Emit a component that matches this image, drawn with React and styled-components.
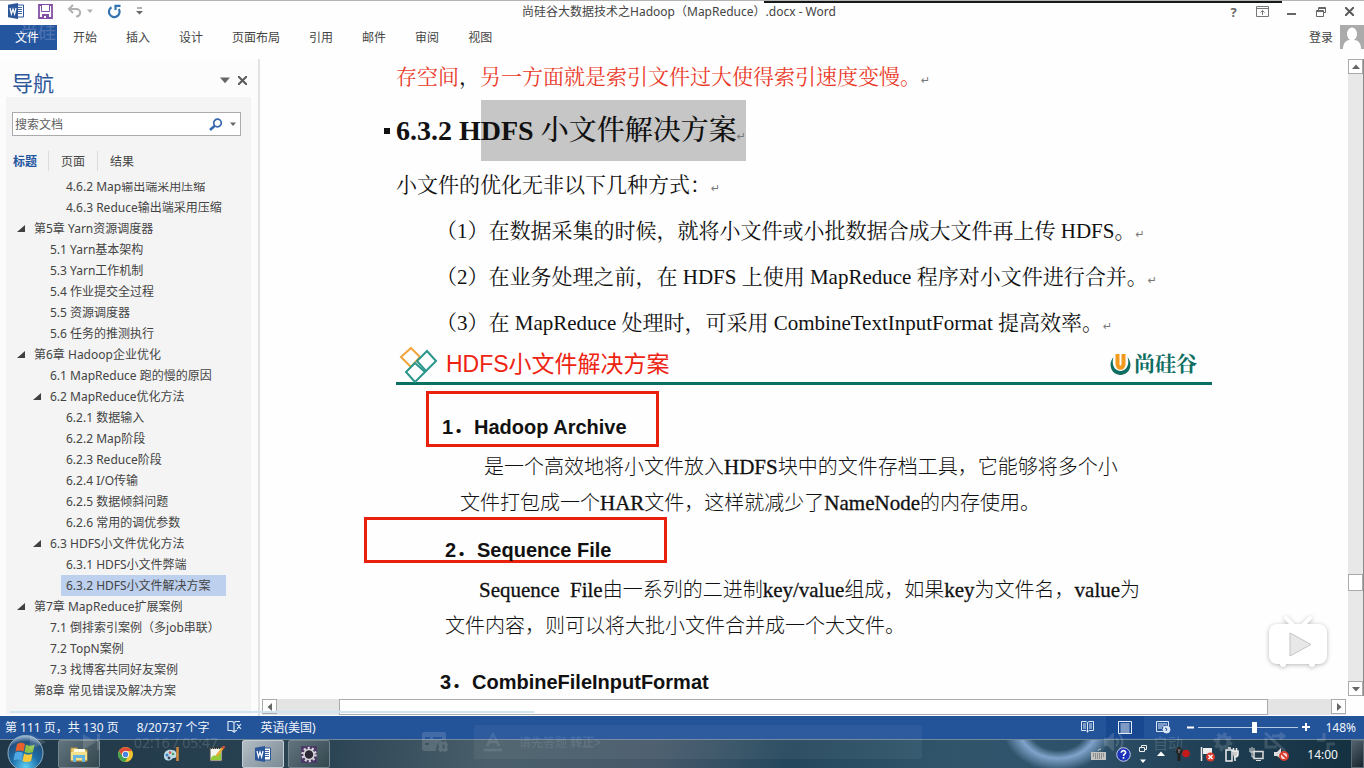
import React, { useState } from "react";
import styled, { createGlobalStyle, css } from "styled-components";

const UI = `"Noto Sans", "Noto Sans CJK SC", sans-serif`;
const SERIF = `"Liberation Serif", "Noto Serif CJK SC", "Noto Sans CJK SC", serif`;
const ARIAL = `"Liberation Sans", "Noto Sans CJK SC", sans-serif`;
const SLIDE = `"Noto Sans CJK SC", sans-serif`;

const Global = createGlobalStyle`
  *, *::before, *::after { box-sizing: border-box; }
  body { margin: 0; font-family: ${UI}; font-size: 12px; color: #444; background: #fff; }
  button, input { font: inherit; color: inherit; }
  h1, h2, h3, p, ul { margin: 0; padding: 0; font-weight: inherit; }
  svg { display: block; flex: none; }
`;

const Window = styled.div`
  position: relative;
  display: flex;
  flex-direction: column;
  height: 100vh;
  min-width: 1100px;
  overflow: hidden;
  background: #fefefe;
`;

const PlainButton = styled.button`
  display: flex;
  align-items: center;
  justify-content: center;
  border: 0;
  padding: 0;
  background: transparent;
`;

/* ---------- title bar ---------- */
const TitleBar = styled.header`
  display: grid;
  grid-template-columns: 1fr auto 1fr;
  height: 24px;
  flex: none;
  border-top: 1px solid #b4b4b4;
`;

const ShareLine = styled.div`
  position: absolute;
  top: 1px;
  left: 56%;
  right: 6%;
  height: 2px;
  background: #15191a;
`;

const QuickAccess = styled.div`
  display: flex;
  align-items: center;
  gap: 14px;
  padding: 0 0 3px 8px;
`;

const UndoGroup = styled.div`
  display: flex;
  align-items: center;
  gap: 5px;
`;

const WindowTitle = styled.h1`
  margin-right: 6px;
  font-size: 12px;
  line-height: 22px;
  white-space: nowrap;
`;

const WindowControls = styled.div`
  display: flex;
  justify-content: flex-end;
  align-items: center;
`;

const ControlButton = styled(PlainButton)`
  width: 29px;
  height: 22px;
  padding-bottom: 2px;
  color: #666;
  font-size: 13px;
  font-weight: 700;
`;

/* ---------- ribbon ---------- */
const Ribbon = styled.nav`
  display: flex;
  align-items: center;
  height: 26px;
  flex: none;
`;

const RibbonTab = styled(PlainButton)`
  height: 25px;
  padding: 0 15px 0 14px;
  white-space: nowrap;
  ${(p) =>
    p.$file &&
    css`
      background: #24559f;
      color: #fff;
      padding: 0 18px 0 15px;
      margin-right: 2px;
    `}
`;

const Account = styled.div`
  display: flex;
  align-items: center;
  gap: 7px;
  margin-left: auto;
`;

/* ---------- body ---------- */
const Body = styled.div`
  display: flex;
  flex: 1;
  min-height: 0;
  padding-top: 9px;
`;

const NavPane = styled.aside`
  display: flex;
  flex-direction: column;
  width: 260px;
  flex: none;
  padding: 0 7px 2px 6px;
  border-right: 2px solid #e2e2e2;
  background: #fcfcfc;
`;

const NavHeader = styled.div`
  display: flex;
  align-items: center;
  gap: 8px;
  height: 38px;
  flex: none;
  padding: 4px 4px 0 6px;
`;

const NavTitle = styled.h2`
  flex: 1;
  padding-top: 6px;
  font-size: 21px;
  line-height: 32px;
  color: #2c569a;
`;

const NavPanel = styled.div`
  display: flex;
  flex-direction: column;
  flex: 1;
  min-height: 0;
  background: #f4f4f4;
`;

const SearchBox = styled.div`
  display: flex;
  align-items: center;
  gap: 7px;
  height: 24px;
  flex: none;
  margin: 15px 10px 0 6px;
  padding-right: 4px;
  border: 1px solid #ababab;
  background: #fff;
`;

const SearchInput = styled.input`
  flex: 1;
  min-width: 0;
  border: 0;
  outline: 0;
  padding: 0 2px;
  background: transparent;
  &::placeholder { color: #606060; opacity: 1; }
`;

const NavTabs = styled.div`
  display: flex;
  height: 20px;
  flex: none;
  margin: 15px 0 11px;
`;

const NavTab = styled(PlainButton)`
  width: ${(p) => (p.$first ? "42px" : "49px")};
  padding-right: ${(p) => (p.$first ? "5px" : "0")};
  border-left: 1px solid ${(p) => (p.$first ? "transparent" : "#dcdcdc")};
  ${(p) => p.$active && css`color: #24559f; font-weight: 700;`}
`;

const Tree = styled.ul`
  display: flex;
  flex-direction: column;
  justify-content: flex-end;
  flex: 1;
  min-height: 0;
  overflow: hidden;
  list-style: none;
  padding-bottom: 13px;
`;

const TreeRow = styled.li`
  display: flex;
  height: 21px;
  flex: none;
  padding-left: ${(p) => p.$level * 16 - 5}px;
`;

const Toggle = styled.span`
  display: flex;
  align-items: center;
  width: 12px;
`;

const TreeLink = styled.a`
  padding: 0 15px 0 5px;
  line-height: 21px;
  white-space: nowrap;
  color: #444;
  text-decoration: none;
  background: ${(p) => (p.$current ? "#bdd0ee" : "transparent")};
`;

/* ---------- document ---------- */
const DocArea = styled.main`
  display: flex;
  flex-direction: column;
  flex: 1;
  min-width: 0;
`;

const DocRow = styled.div`
  display: flex;
  flex: 1;
  min-height: 0;
`;

const Viewport = styled.div`
  flex: 1;
  min-width: 0;
  overflow: hidden;
`;

const Page = styled.article`
  width: 816px;
  margin: 0 auto;
  color: #111;
  font-family: ${SERIF};
  font-size: 20px;
  white-space: nowrap;
`;

const Paragraph = styled.p`
  font-size: 21px;
  line-height: ${(p) => (p.$tight ? "36px" : "46px")};
  padding-left: ${(p) => (p.$item ? "40px" : "0")};
`;

const Red = styled.span`
  color: #ea3b2a;
`;

const Mark = styled.span`
  color: #777;
  font: 11px "DejaVu Sans", sans-serif;
`;

const Heading = styled.h2`
  position: relative;
  display: flex;
  align-items: center;
  height: 61px;
  margin: 5px 0 1px;
  font-size: 28px;
  font-weight: 700;
  white-space: pre;
`;

const Bullet = styled.span`
  position: absolute;
  left: -12px;
  width: 6px;
  height: 6px;
  background: #111;
`;

const Selected = styled.span`
  line-height: 61px;
  background: #c6c6c6;
`;

const HeadingCjk = styled.span`
  font-weight: 500;
`;

const SlideHeader = styled.div`
  display: flex;
  align-items: center;
  height: 39px;
  padding: 0 15px 0 3px;
  border-bottom: 3px solid #0a7062;
`;

const SlideTitle = styled.h3`
  flex: 1;
  padding-left: 8px;
  font-family: ${ARIAL};
  font-size: 23px;
  line-height: 32px;
  color: #ee2413;
`;

const Brand = styled.span`
  padding-left: 2px;
  font-size: 21px;
  font-weight: 700;
  line-height: 24px;
  color: #0f6e62;
`;

const SubHeading = styled.h3`
  display: flex;
  align-items: flex-end;
  width: max-content;
  min-width: ${(p) => p.$width};
  height: ${(p) => p.$height};
  margin: ${(p) => p.$margin};
  padding: ${(p) => p.$padding};
  border: 3px solid ${(p) => (p.$boxed ? "#e8200c" : "transparent")};
  font-family: ${ARIAL};
  font-size: 20px;
  font-weight: 700;
  line-height: 20px;
`;

const Ordinal = styled.span`
  width: 32px;
`;

const SlideText = styled.p`
  font-family: ${SLIDE};
  font-weight: 300;
  line-height: 36px;
  padding-left: ${(p) => p.$indent};
  text-indent: ${(p) => p.$first};
  white-space: pre;
`;

const Latin = styled.span`
  font-family: ${SERIF};
  font-size: 21px;
  font-weight: 400;
  line-height: 20px;
  -webkit-text-stroke: 0.3px #111;
`;

/* ---------- scroll bars ---------- */
const VScroll = styled.div`
  display: flex;
  flex-direction: column;
  width: 16px;
  flex: none;
  background: #e8e8e8;
  border-right: 1px solid #8b8b8b;
`;

const HScroll = styled.div`
  display: flex;
  height: 16px;
  margin: 3px 18px 1px 2px;
  flex: none;
  background: #e4e4e4;
`;

const ScrollButton = styled(PlainButton)`
  width: 15px;
  height: 15px;
  flex: none;
  border: 1px solid #ababab;
  background: #fff;
`;

const ScrollThumb = styled.div`
  border: 1px solid #ababab;
  background: #fff;
  flex: ${(p) => p.$grow || "none"};
  ${(p) => p.$square && css`height: 17px;`}
`;

const ScrollGap = styled.div`
  flex: ${(p) => p.$grow};
`;

/* ---------- status bar ---------- */
const StatusBar = styled.footer`
  display: flex;
  align-items: center;
  gap: 18px;
  height: 23px;
  flex: none;
  padding: 0 8px 1px 5px;
  background: #235399;
  color: #f1f5fb;
  white-space: nowrap;
`;

const StatusRight = styled.div`
  display: flex;
  align-items: center;
  margin-left: auto;
`;

const ViewButton = styled(PlainButton)`
  width: 38px;
  height: 22px;
  background: ${(p) => (p.$active ? "#18488f" : "transparent")};
`;

const ZoomButton = styled(PlainButton)`
  width: 16px;
  height: 20px;
`;

const ZoomSlider = styled.input`
  appearance: none;
  width: 100px;
  height: 14px;
  margin: 0;
  background: linear-gradient(#b8cae6, #b8cae6) center / 100% 1px no-repeat;
  &::-webkit-slider-thumb {
    appearance: none;
    width: 5px;
    height: 11px;
    background: #fff;
  }
`;

const ZoomValue = styled.span`
  padding-left: 11px;
`;

/* ---------- taskbar ---------- */
const TaskBar = styled.footer`
  display: flex;
  align-items: center;
  height: 29px;
  flex: none;
  border-top: 1px solid #71889b;
  background:
    radial-gradient(ellipse 46px 36px at 1058px -12px, transparent 62%, #7fa3ca 84%, transparent 120%),
    linear-gradient(100deg, #1f3746 0%, #2b4454 24%, #4a5f6b 36%, #46596a 48%, #24475d 58%, #31566c 70%, #2d5068 80%, #1d3c50 90%, #14303f 100%);
`;

const StartButton = styled(PlainButton)`
  width: 37px;
  height: 34px;
  margin: -5px 14px 0 7px;
`;

const TaskButton = styled(PlainButton)`
  width: 42px;
  height: 28px;
  margin-right: 4px;
  border-radius: 2px;
  ${(p) =>
    p.$open &&
    css`
      border: 1px solid #74858f;
      background: linear-gradient(135deg, #62747e, #33474f);
    `}
  ${(p) =>
    p.$active &&
    css`
      border: 1px solid #c5cdd3;
      background: linear-gradient(135deg, #b3bdc5, #7b8a95);
    `}
`;

const Tray = styled.div`
  display: flex;
  align-items: center;
  gap: 10px;
  margin-left: auto;
`;

const LangStack = styled.div`
  display: flex;
  flex-direction: column;
  align-items: center;
  gap: 6px;
  margin-left: -2px;
`;

const Clock = styled.time`
  padding: 0 3px 0 8px;
  font-size: 12px;
  color: #f3f6f8;
`;

const ShowDesktop = styled(PlainButton)`
  width: 13px;
  height: 28px;
  border: 1px solid #5c6b75;
  background: linear-gradient(135deg, #54646e, #16242d);
`;

/* ---------- fading video controls ---------- */
const PlayerLayer = styled.div`
  position: absolute;
  left: 10px;
  right: 10px;
  bottom: 9px;
  display: flex;
  flex-direction: column;
  gap: 12px;
  pointer-events: none;
  color: #fff;
`;

const Progress = styled.div`
  width: 39%;
  height: 2px;
  background: #cfe6f0;
`;

const PlayerRow = styled.div`
  display: flex;
  align-items: center;
  height: 34px;
  padding: 0 18px 0 20px;
  opacity: 0.14;
`;

const PlayerTime = styled.span`
  flex: none;
  width: 322px;
  padding-left: 34px;
  font-size: 14px;
`;

const DanmakuBox = styled.div`
  display: flex;
  align-items: center;
  gap: 17px;
  flex: none;
  width: 448px;
  height: 34px;
  margin-left: 26px;
  padding-left: 10px;
  border-radius: 2px;
  background: rgba(255, 255, 255, 0.35);
`;

const PlayerRight = styled.div`
  display: flex;
  align-items: center;
  gap: 29px;
  margin-left: auto;
  font-size: 15px;
`;

const Watermark = styled.span`
  position: absolute;
  left: 20px;
  top: 22px;
  color: rgba(255, 255, 255, 0.2);
  font-size: 18px;
  line-height: 20px;
`;

const TvBadge = styled.div`
  position: absolute;
  right: 34px;
  bottom: 98px;
`;

/* ---------- icons ---------- */
const WordIcon = ({ size = 16 }) => (
  <svg width={size} height={size} viewBox="0 0 16 16">
    <path d="M9 2h6.5v12H9z" fill="#fff" stroke="#2b579a" />
    <path d="M10 4.5h4M10 6.5h4M10 8.5h4M10 10.5h4" stroke="#2b579a" strokeWidth=".9" />
    <path d="M0 1.8 10 0v16L0 14.2z" fill="#2b579a" />
    <path d="m2 5 1.4 6L5 6l1.6 5L8 5" fill="none" stroke="#fff" strokeWidth="1.2" />
  </svg>
);

const SaveIcon = () => (
  <svg width="15" height="15" viewBox="0 0 15 15">
    <path d="M1 1h13v13H1z" fill="#fff" stroke="#8350a5" strokeWidth="1.800" />
    <path d="M3.500 1v6.500h8V1" fill="#fff" stroke="#8350a5" strokeWidth="1" />
    <path d="M4 10h7v4H4z" fill="#8350a5" />
    <path d="M6 12h2v2H6z" fill="#fff" />
  </svg>
);

const UndoIcon = () => (
  <svg width="15" height="14" viewBox="0 0 15 14" fill="none" stroke="#b0b0b0" strokeWidth="2">
    <path d="M6 1 2 5l4 4M2 5h7c6 0 5 7 0 7.5" />
  </svg>
);

const RedoIcon = () => (
  <svg width="15" height="15" viewBox="0 0 15 15" fill="none" stroke="#3572b0" strokeWidth="2.2">
    <path d="M4.5 3.2A5.3 5.3 0 1 0 11.8 5" />
    <path d="M8.5 6V1.8h5" />
  </svg>
);

const Triangle = ({ dir = "down", size = 6, color = "#666" }) => {
  const turn = { down: 0, left: 90, up: 180, right: 270 }[dir];
  return (
    <svg width={size} height={size} viewBox="0 0 8 8">
      <path d="M0 2h8L4 6.5z" fill={color} transform={`rotate(${turn} 4 4)`} />
    </svg>
  );
};

const CustomizeIcon = () => (
  <svg width="7" height="8" viewBox="0 0 7 8">
    <path d="M1 1h5" stroke="#666" />
    <path d="M0 4h7L3.500 7.500z" fill="#666" />
  </svg>
);

const RibbonOptionsIcon = () => (
  <svg width="13" height="11" viewBox="0 0 13 11" fill="none" stroke="#777">
    <path d="M.5.500h12v10H.5zM.5 2.500h12M6.500 9V4.500M4.500 6.500l2-2 2 2" />
  </svg>
);

const MinimizeIcon = () => (
  <svg width="9" height="10" viewBox="0 0 9 10">
    <path d="M0 7h9" stroke="#666" strokeWidth="2" />
  </svg>
);

const RestoreIcon = () => (
  <svg width="10" height="10" viewBox="0 0 10 10" fill="none" stroke="#666">
    <path d="M2.500 3V.5h7v5H7.500M2.500 1.500h7M.5 3.500h7v6h-7zM.5 4.500h7" />
  </svg>
);

const CloseIcon = () => (
  <svg width="9" height="9" viewBox="0 0 9 9" stroke="#5a5a5a" strokeWidth="2">
    <path d="m0 0 9 9M9 0 0 9" />
  </svg>
);

const Avatar = () => (
  <svg width="24" height="24" viewBox="0 0 24 24">
    <path d="M0 0h24v24H0z" fill="#ababab" />
    <ellipse cx="12" cy="9" rx="5" ry="6.500" fill="#fff" />
    <path d="M3 24c0-7 4-9 7-9h4c4 0 7 3 7 9z" fill="#fff" />
  </svg>
);

const SearchIcon = () => (
  <svg width="14" height="13" viewBox="0 0 14 13" fill="none" stroke="#3567ad">
    <circle cx="8.500" cy="5" r="3.800" strokeWidth="1.700" />
    <path d="m5.500 8-4.500 4" strokeWidth="2.400" />
  </svg>
);

const ExpandedIcon = () => (
  <svg width="8" height="8" viewBox="0 0 8 8">
    <path d="M8 0v7H0z" fill="#404040" />
  </svg>
);

const Diamonds = () => (
  <svg width="39" height="37" viewBox="0 0 39 37" fill="#fff" strokeWidth="2">
    <path d="m12 2 9 9-9 10-10-10z" stroke="#f0a43a" />
    <path d="m28 5 9 10-10 10-9-10z" stroke="#2b978c" />
    <path d="m16 17 10 9-10 10-9-10z" stroke="#2b978c" />
  </svg>
);

const BrandLogo = () => (
  <svg width="23" height="23" viewBox="0 0 23 23" fill="none">
    <path d="M4.500 4C-2 12 3 22 11.500 22S25 12 18.500 4C21 12 17 18 11.500 18S2 12 4.500 4z" fill="#0f6e62" />
    <path d="M8.500 1v10c0 5 6 5 6 0V1" stroke="#f39a1e" strokeWidth="4" />
  </svg>
);

const ProofIcon = () => (
  <svg width="15" height="12" viewBox="0 0 15 12" fill="none" stroke="#dbe6f6">
    <path d="M7 1.500 5 .5H1v9h4l2 1.500zM7 1.500 9 .5h4M7 11l2-1.500h1M10 3l4 5M14 3l-4 5" strokeWidth="1.200" />
  </svg>
);

const ReadIcon = () => (
  <svg width="13" height="12" viewBox="0 0 13 12" fill="none" stroke="#dbe6f6">
    <path d="M6.500 1.500v10M6.500 1.500 5 .5H.5v9H5l1.500 1.500L8 9.500h4.500v-9H8zM2 3h3M2 5h3M2 7h3M8 3h3M8 5h3M8 7h3" />
  </svg>
);

const PrintLayoutIcon = () => (
  <svg width="14" height="13" viewBox="0 0 14 13" fill="none" stroke="#e4ecf8">
    <path d="M.5.500h13v12H.5zM2.500 3h9M2.500 5h9M2.500 7h9M2.500 9h9M2.500 11h9" />
  </svg>
);

const WebLayoutIcon = () => (
  <svg width="15" height="13" viewBox="0 0 15 13" fill="none" stroke="#dbe6f6">
    <path d="M7 10.500H.5V.5h12V5M2 3h9M2 5h6M2 7h4" />
    <circle cx="10.500" cy="8.500" r="3.500" fill="#dbe6f6" />
    <path d="m9 7 2 1-1 2" stroke="#235399" />
  </svg>
);

const StartOrb = () => (
  <svg width="37" height="34" viewBox="0 0 37 34">
    <defs>
      <radialGradient id="orb" cx=".5" cy=".9" r=".9">
        <stop offset="0" stopColor="#5cd0f5" />
        <stop offset=".45" stopColor="#1d6da6" />
        <stop offset=".8" stopColor="#234f7d" />
        <stop offset="1" stopColor="#a9c4da" />
      </radialGradient>
    </defs>
    <circle cx="18.500" cy="18" r="17.500" fill="url(#orb)" stroke="#8fb0c8" />
    <path d="M10 9q4-2.500 8 0l-1.500 7.500q-4-2-8 0z" fill="#e8602c" />
    <path d="M19 9.500q4 2.500 8.500 0L26 17q-4 2-8.500 0z" fill="#8fc046" />
    <path d="M8 18q4-2.500 8 0l-1.500 7.500q-4-2-8 0z" fill="#4fa8e4" />
    <path d="M17 18.500q4 2.500 8.500 0L24 26q-4 2-8.500 0z" fill="#f9c93a" />
  </svg>
);

const ExplorerIcon = () => (
  <svg width="18" height="16" viewBox="0 0 18 16">
    <path d="M1 2h6l1 2h9v11H1z" fill="#e7c768" stroke="#b99746" />
    <path d="M4 3h11v4H4z" fill="#fffbe2" />
    <path d="M1 6h16v8H1z" fill="#f5e08c" />
    <path d="M3 16V9h12v7h-3v-4H6v4z" fill="#67b4df" />
  </svg>
);

const ChromeIcon = () => (
  <svg width="15" height="15" viewBox="0 0 15 15">
    <circle cx="7.500" cy="7.500" r="7.500" fill="#f0c530" />
    <path d="M1 4a7.500 7.500 0 0 1 13 0H7.500L4.500 9z" fill="#de4b3a" />
    <path d="M1 4a7.500 7.500 0 0 0 6 11l3.500-6-6 .5z" fill="#3da251" />
    <circle cx="7.500" cy="7.500" r="3.500" fill="#fff" />
    <circle cx="7.500" cy="7.500" r="2.700" fill="#4a86dd" />
  </svg>
);

const PaintIcon = () => (
  <svg width="17" height="15" viewBox="0 0 17 15">
    <path d="M1 9C1 4 5 2 9 3c5 0 5 5 4 7s-3 0-4 2-8 3-8-3z" fill="#bcdbea" />
    <circle cx="4" cy="8" r="1.500" fill="#3c80bd" />
    <circle cx="7" cy="5.500" r="1.300" fill="#d65143" />
    <circle cx="10" cy="7" r="1.300" fill="#54a350" />
    <circle cx="6" cy="11" r="1.400" fill="#345" />
    <path d="M14.500 0v14" stroke="#d58a3b" strokeWidth="2.500" />
  </svg>
);

const NotepadIcon = () => (
  <svg width="16" height="16" viewBox="0 0 16 16">
    <path d="M1 2h12v13H1z" fill="#f4f4ee" stroke="#444" />
    <path d="M2 12c3-5 6 0 10-6v8H2z" fill="#94cc38" />
    <path d="M2 2h10" stroke="#333" strokeWidth="2" strokeDasharray="1 1" />
    <path d="m14.500 1-7 9" stroke="#e4ac35" strokeWidth="2.200" />
    <path d="m15.500 0-2 2.500" stroke="#cf4c3d" strokeWidth="2.500" />
  </svg>
);

const GearRingIcon = () => (
  <svg width="18" height="17" viewBox="0 0 18 17">
    <path d="M1 0h16v17H1z" fill="#4b3a66" />
    <circle cx="9" cy="8.500" r="6.500" fill="none" stroke="#dcdadf" strokeWidth="2.400" strokeDasharray="2 2.080" />
    <circle cx="9" cy="8.500" r="5" fill="#2c2835" stroke="#dcdadf" strokeWidth="1.500" />
  </svg>
);

const KeyboardIcon = () => (
  <svg width="15" height="12" viewBox="0 0 15 12">
    <path d="M7 3q0-2 3-2" stroke="#c4c4c0" fill="none" />
    <path d="M0 4h15v8H0z" fill="#c4c4c0" />
    <path d="M2 6h11M2 8h11M4 10h7" stroke="#55585a" strokeDasharray="1 1" />
  </svg>
);

const HelpIcon = () => (
  <svg width="15" height="15" viewBox="0 0 15 15">
    <circle cx="7.500" cy="7.500" r="6.800" fill="#1c32b8" stroke="#c3cbe8" />
    <path d="M5.300 5.800c0-3 4.600-2.700 4.300 0C9.500 7 7.500 7 7.500 9M7.500 10v1.800" fill="none" stroke="#fff" strokeWidth="1.600" />
  </svg>
);

const SmallRestore = () => (
  <svg width="8" height="7" viewBox="0 0 8 7" fill="none" stroke="#eee">
    <path d="M2.500 2V.5h5v4H6M.5 2.500h5v4h-5z" />
  </svg>
);

const RecorderIcon = () => (
  <svg width="15" height="14" viewBox="0 0 15 14">
    <circle cx="4" cy="3.500" r="3.500" fill="#222" />
    <path d="M4 5v9" stroke="#222" strokeWidth="3" />
    <path d="M4 2v4" stroke="#999" />
    <circle cx="11" cy="6.500" r="3.800" fill="#c31b1b" />
  </svg>
);

const FlagIcon = () => (
  <svg width="15" height="15" viewBox="0 0 15 15">
    <path d="M1.500 0v14" stroke="#eee" strokeWidth="1.500" />
    <path d="M3 1h9v6H3z" fill="#eee" />
    <circle cx="10.500" cy="10" r="4.500" fill="#d93a2c" />
    <path d="m8.500 8 4 4M12.500 8l-4 4" stroke="#fff" strokeWidth="1.500" />
  </svg>
);

const PlugIcon = () => (
  <svg width="14" height="15" viewBox="0 0 14 15" fill="none" stroke="#eee">
    <path d="M1 3h6v11H1zM3 1h3" strokeWidth="1.500" />
    <path d="M7 4h6v3q0 3-3 3v4M8.500 1v3M11.500 1v3" fill="#ccc" strokeWidth="1.500" />
  </svg>
);

const NetworkIcon = () => (
  <svg width="15" height="14" viewBox="0 0 15 14" fill="none" stroke="#ddd">
    <path d="M5 4.500h9v7H5z" strokeWidth="1.500" fill="#223a49" />
    <path d="M7 13.500h5M1 1v4h4V1M3 0v10h2" />
  </svg>
);

const MutedIcon = () => (
  <svg width="15" height="14" viewBox="0 0 15 14">
    <path d="M0 5h3l4-4v11L3 9H0z" fill="#ddd" />
    <circle cx="10" cy="9" r="4" fill="#f4dcd8" stroke="#d83b2b" strokeWidth="1.800" />
    <path d="m7.500 6.500 5 5" stroke="#d83b2b" strokeWidth="1.800" />
  </svg>
);

const TvDrawing = styled.svg`
  filter: drop-shadow(0 1px 2px rgba(0, 0, 0, 0.28));
`;

const TvIcon = () => (
  <TvDrawing width="64" height="56" viewBox="0 0 64 56">
    <path d="m20 4 7 7M44 4l-7 7" stroke="#fff" strokeWidth="4" strokeLinecap="round" />
    <rect x="3" y="10" width="58" height="40" rx="8" fill="#fff" />
    <circle cx="17" cy="50" r="3" fill="#fff" />
    <circle cx="46" cy="50" r="3" fill="#fff" />
    <path d="M24 19v23l21-11.500z" fill="#e8e8e8" stroke="#c4c4c4" strokeLinejoin="round" />
  </TvDrawing>
);

const PlayerGear = () => (
  <svg width="22" height="20" viewBox="0 0 22 20" fill="none" stroke="#fff">
    <circle cx="11" cy="10" r="5.500" strokeWidth="4" />
    <circle cx="11" cy="10" r="8" strokeWidth="3" strokeDasharray="3.200 3.080" />
  </svg>
);

/* ---------- data ---------- */
const ribbonTabs = ["开始", "插入", "设计", "页面布局", "引用", "邮件", "审阅", "视图"];

const outline = [
  [3, "4.6.2 Map输出端采用压缩"],
  [3, "4.6.3 Reduce输出端采用压缩"],
  [1, "第5章 Yarn资源调度器", true],
  [2, "5.1 Yarn基本架构"],
  [2, "5.3 Yarn工作机制"],
  [2, "5.4 作业提交全过程"],
  [2, "5.5 资源调度器"],
  [2, "5.6 任务的推测执行"],
  [1, "第6章 Hadoop企业优化", true],
  [2, "6.1 MapReduce 跑的慢的原因"],
  [2, "6.2 MapReduce优化方法", true],
  [3, "6.2.1 数据输入"],
  [3, "6.2.2 Map阶段"],
  [3, "6.2.3 Reduce阶段"],
  [3, "6.2.4 I/O传输"],
  [3, "6.2.5 数据倾斜问题"],
  [3, "6.2.6 常用的调优参数"],
  [2, "6.3 HDFS小文件优化方法", true],
  [3, "6.3.1 HDFS小文件弊端"],
  [3, "6.3.2 HDFS小文件解决方案"],
  [1, "第7章 MapReduce扩展案例", true],
  [2, "7.1 倒排索引案例（多job串联）"],
  [2, "7.2 TopN案例"],
  [2, "7.3 找博客共同好友案例"],
  [1, "第8章 常见错误及解决方案"],
];

const methods = [
  "（1）在数据采集的时候，就将小文件或小批数据合成大文件再上传 HDFS。",
  "（2）在业务处理之前，在 HDFS 上使用 MapReduce 程序对小文件进行合并。",
  "（3）在 MapReduce 处理时，可采用 CombineTextInputFormat 提高效率。",
];

const Return = () => <Mark>↵</Mark>;

export default function App() {
  const [current, setCurrent] = useState("6.3.2 HDFS小文件解决方案");
  const [zoom, setZoom] = useState(56);

  return (
    <Window>
      <Global />
      <TitleBar>
        <QuickAccess>
          <WordIcon />
          <PlainButton aria-label="保存"><SaveIcon /></PlainButton>
          <UndoGroup>
            <PlainButton aria-label="撤消"><UndoIcon /></PlainButton>
            <Triangle color="#b0b0b0" />
          </UndoGroup>
          <PlainButton aria-label="恢复"><RedoIcon /></PlainButton>
          <PlainButton aria-label="自定义"><CustomizeIcon /></PlainButton>
        </QuickAccess>
        <WindowTitle>尚硅谷大数据技术之Hadoop（MapReduce）.docx - Word</WindowTitle>
        <WindowControls>
          <ControlButton>?</ControlButton>
          <ControlButton aria-label="功能区选项"><RibbonOptionsIcon /></ControlButton>
          <ControlButton aria-label="最小化"><MinimizeIcon /></ControlButton>
          <ControlButton aria-label="还原"><RestoreIcon /></ControlButton>
          <ControlButton aria-label="关闭"><CloseIcon /></ControlButton>
        </WindowControls>
      </TitleBar>
      <ShareLine />

      <Ribbon>
        <RibbonTab $file>文件</RibbonTab>
        {ribbonTabs.map((t) => <RibbonTab key={t}>{t}</RibbonTab>)}
        <Account>
          <span>登录</span>
          <Avatar />
        </Account>
      </Ribbon>

      <Body>
        <NavPane>
          <NavHeader>
            <NavTitle>导航</NavTitle>
            <Triangle size={10} />
            <PlainButton aria-label="关闭导航"><CloseIcon /></PlainButton>
          </NavHeader>
          <NavPanel>
            <SearchBox>
              <SearchInput aria-label="搜索文档" placeholder="搜索文档" />
              <SearchIcon />
              <Triangle size={6} />
            </SearchBox>
            <NavTabs>
              <NavTab $first $active>标题</NavTab>
              <NavTab>页面</NavTab>
              <NavTab>结果</NavTab>
            </NavTabs>
            <Tree>
              {outline.map(([level, label, open]) => (
                <TreeRow key={label} $level={level}>
                  <Toggle>{open && <ExpandedIcon />}</Toggle>
                  <TreeLink href="#" $current={label === current} onClick={() => setCurrent(label)}>
                    {label}
                  </TreeLink>
                </TreeRow>
              ))}
            </Tree>
          </NavPanel>
        </NavPane>

        <DocArea>
          <DocRow>
            <Viewport>
              <Page>
                <Paragraph $tight>
                  <Red>存空间</Red>，<Red>另一方面就是索引文件过大使得索引速度变慢。</Red>
                  <Return />
                </Paragraph>
                <Heading>
                  <Bullet />
                  {"6.3.2 H"}
                  <Selected>{"DFS "}<HeadingCjk>小文件解决方案</HeadingCjk><Return /></Selected>
                </Heading>
                <Paragraph>小文件的优化无非以下几种方式：<Return /></Paragraph>
                {methods.map((m) => <Paragraph key={m} $item>{m}<Return /></Paragraph>)}

                <SlideHeader>
                  <Diamonds />
                  <SlideTitle>HDFS小文件解决方案</SlideTitle>
                  <BrandLogo />
                  <Brand>尚硅谷</Brand>
                </SlideHeader>
                <SubHeading $boxed $width="233px" $height="56px" $margin="6px 0 1px 30px" $padding="0 0 7px 13px">
                  <Ordinal>1．</Ordinal>Hadoop Archive
                </SubHeading>
                <SlideText $indent="64px" $first="24px">
                  是一个高效地将小文件放入<Latin>HDFS</Latin>块中的文件存档工具，它能够将多个小{"\n"}文件打包成一个<Latin>HAR</Latin>文件，这样就减少了<Latin>NameNode</Latin>的内存使用。
                </SlideText>
                <SubHeading $boxed $width="303px" $height="46px" $margin="-3px 0 8px -32px" $padding="0 0 0 78px">
                  <Ordinal>2．</Ordinal>Sequence File
                </SubHeading>
                <SlideText $indent="49px" $first="34px">
                  <Latin>Sequence  File</Latin>由一系列的二进制<Latin>key/value</Latin>组成，如果<Latin>key</Latin>为文件名，<Latin>value</Latin>为{"\n"}文件内容，则可以将大批小文件合并成一个大文件。
                </SlideText>
                <SubHeading $width="233px" $height="46px" $margin="6px 0 0 30px" $padding="0 0 0 11px">
                  <Ordinal>3．</Ordinal>CombineFileInputFormat
                </SubHeading>
              </Page>
            </Viewport>
            <VScroll>
              <ScrollButton aria-label="向上"><Triangle dir="up" size={8} /></ScrollButton>
              <ScrollGap $grow={502} />
              <ScrollThumb $square />
              <ScrollGap $grow={90} />
              <ScrollButton aria-label="向下"><Triangle size={8} /></ScrollButton>
            </VScroll>
          </DocRow>
          <HScroll>
            <ScrollButton aria-label="向左"><Triangle dir="left" size={8} /></ScrollButton>
            <ScrollGap $grow={62} />
            <ScrollThumb $grow={928} />
            <ScrollGap $grow={63} />
            <ScrollButton aria-label="向右"><Triangle dir="right" size={8} /></ScrollButton>
          </HScroll>
        </DocArea>
      </Body>

      <StatusBar>
        <span>第 111 页，共 130 页</span>
        <span>8/20737 个字</span>
        <ProofIcon />
        <span>英语(美国)</span>
        <StatusRight>
          <ViewButton aria-label="阅读视图"><ReadIcon /></ViewButton>
          <ViewButton $active aria-label="页面视图"><PrintLayoutIcon /></ViewButton>
          <ViewButton aria-label="Web 版式"><WebLayoutIcon /></ViewButton>
          <ZoomButton aria-label="缩小">
            <svg width="7" height="7"><path d="M0 3.500h7" stroke="#fff" strokeWidth="2" /></svg>
          </ZoomButton>
          <ZoomSlider type="range" aria-label="缩放" value={zoom} onChange={(e) => setZoom(e.target.value)} />
          <ZoomButton aria-label="放大">
            <svg width="8" height="8"><path d="M0 4h8M4 0v8" stroke="#fff" strokeWidth="2" /></svg>
          </ZoomButton>
          <ZoomValue>148%</ZoomValue>
        </StatusRight>
      </StatusBar>

      <TaskBar>
        <StartButton aria-label="开始菜单"><StartOrb /></StartButton>
        <TaskButton $open aria-label="资源管理器"><ExplorerIcon /></TaskButton>
        <TaskButton aria-label="Chrome"><ChromeIcon /></TaskButton>
        <TaskButton aria-label="画图"><PaintIcon /></TaskButton>
        <TaskButton aria-label="Notepad++"><NotepadIcon /></TaskButton>
        <TaskButton $active aria-label="Word"><WordIcon /></TaskButton>
        <TaskButton $open aria-label="Eclipse"><GearRingIcon /></TaskButton>
        <Tray>
          <KeyboardIcon />
          <HelpIcon />
          <LangStack>
            <SmallRestore />
            <Triangle size={6} color="#fff" />
          </LangStack>
          <Triangle dir="up" size={8} color="#fff" />
          <RecorderIcon />
          <FlagIcon />
          <PlugIcon />
          <NetworkIcon />
          <MutedIcon />
          <Clock>14:00</Clock>
          <ShowDesktop aria-label="显示桌面" />
        </Tray>
      </TaskBar>

      <Watermark>尚硅谷</Watermark>
      <TvBadge><TvIcon /></TvBadge>
      <PlayerLayer>
        <Progress />
        <PlayerRow>
          <svg width="70" height="18" viewBox="0 0 70 18" fill="#fff">
            <path d="M0 1v16l16-8zM53 1v16l13-8zM67 1h3v16h-3z" />
          </svg>
          <PlayerTime>02:16 / 05:47</PlayerTime>
          <svg width="26" height="20" viewBox="0 0 26 20" fill="#fff">
            <path fillRule="evenodd" d="M3 0h19q2 0 2 2v6q-9-1-10 9v2H3q-3 0-3-3V2q0-2 3-2zm0 5v2h5V5zm8 0v2h9V5zm-8 6v2h4v-2z" />
            <path fillRule="evenodd" d="m18 9 3 1 3-1 2 4-1 2 1 3-3 2-2-1-3 1-2-3 1-2-1-3zm2.500 3.500v4h2v-4z" />
          </svg>
          <DanmakuBox>
            <svg width="18" height="20" viewBox="0 0 18 20" fill="none" stroke="#fff" strokeWidth="2.500">
              <path d="m3 14 6-12 6 12M5 10h8M0 18h18" />
            </svg>
            <span>请先答题 <b>转正&gt;</b></span>
          </DanmakuBox>
          <PlayerRight>
            <svg width="20" height="18" viewBox="0 0 20 18" fill="none" stroke="#fff" strokeWidth="2">
              <path d="M0 6h4l5-5v16l-5-5H0z" fill="#fff" />
              <path d="M12 5q4 4 0 8M15 1q7 8 0 16" />
            </svg>
            <span>自动</span>
            <PlayerGear />
            <svg width="24" height="20" viewBox="0 0 24 20" fill="none" stroke="#fff" strokeWidth="3">
              <path d="M2 1l20 18M9 4h10M3 6v9h11M17 1l4 3-4 3" />
            </svg>
            <svg width="20" height="20" viewBox="0 0 20 20" fill="none" stroke="#fff" strokeWidth="3">
              <path d="M8 1v7H1M12 19v-7h7" />
            </svg>
          </PlayerRight>
        </PlayerRow>
      </PlayerLayer>
    </Window>
  );
}
